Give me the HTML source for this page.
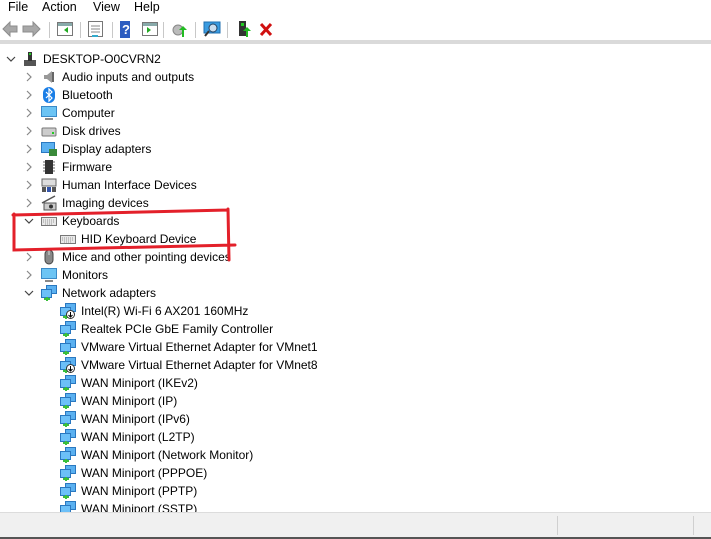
<!DOCTYPE html>
<html><head><meta charset="utf-8"><style>
*{margin:0;padding:0;box-sizing:border-box}
body{width:711px;height:539px;overflow:hidden;background:#fff;font-family:"Liberation Sans",sans-serif;font-size:12px;color:#000;position:relative}
.menu{position:absolute;top:0;left:0;width:711px;height:19px;background:#fff}
.menu span{position:absolute;top:0;font-size:12.5px}
.tb{position:absolute;top:19px;left:0;width:711px;height:21px;background:#fff}
.band{position:absolute;top:40px;left:0;width:711px;height:4px;background:#dadada}
.sep{position:absolute;top:22px;width:1px;height:16px;background:#c8c8c8}
.r{position:absolute;height:18px;line-height:18px;white-space:nowrap}
.ch{position:absolute;width:18px;height:18px}
.ic{position:absolute;width:16px;height:16px}
.status{position:absolute;left:0;top:512px;width:711px;height:25px;background:#f0f0f0;border-top:1px solid #dcdcdc}
.status i{position:absolute;top:3px;width:1px;height:19px;background:#d0d0d0}
</style></head><body>
<div class="menu"><span style="left:8px">File</span><span style="left:42px">Action</span><span style="left:93px">View</span><span style="left:134px">Help</span></div>
<div class="tb">
<svg width="290" height="21" style="position:absolute;left:0;top:0">
<path d="M3 10 L10 3 L10 7 L17 7 L17 13 L10 13 L10 17 Z" fill="#a8a8a8" stroke="#8c8c8c"/>
<path d="M40 10 L33 3 L33 7 L23 7 L23 13 L33 13 L33 17 Z" fill="#a8a8a8" stroke="#8c8c8c"/>
<rect x="57.5" y="3.5" width="15" height="13" fill="#fff" stroke="#777"/><rect x="58" y="4" width="14" height="3" fill="#8aa"/><path d="M68 8 L64 11 L68 14Z" fill="#2a2"/>
<rect x="88.5" y="2.5" width="14" height="15" fill="#fff" stroke="#777"/><path d="M91 7h9M91 10h9M91 13h9" stroke="#888"/><rect x="92" y="16" width="6" height="2" fill="#3ac"/>
<rect x="120" y="2" width="10" height="17" fill="#2c5cc0"/><text x="122" y="15" fill="#fff" font-size="13" font-weight="bold" font-family="Liberation Sans">?</text>
<rect x="142.5" y="3.5" width="15" height="13" fill="#fff" stroke="#777"/><rect x="143" y="4" width="14" height="3" fill="#8aa"/><path d="M147 8 L151 11 L147 14Z" fill="#2a2"/>
<circle cx="178" cy="11" r="5" fill="#bbb" stroke="#888"/><path d="M182 18v-7h-3l4-4 4 4h-3v7z" fill="#2b2"/>
<rect x="204" y="3" width="16" height="11" fill="#3a9be0" stroke="#1f6fb0"/><circle cx="213" cy="9" r="4" fill="#cde" stroke="#246"/><path d="M209 12 L205 17" stroke="#333" stroke-width="2"/>
<rect x="239" y="2" width="7" height="15" fill="#333"/><rect x="241" y="4" width="3" height="3" fill="#2c2"/><path d="M246 18v-6h-3l4-4 4 4h-3v6z" fill="#2b2"/>
<path d="M261 5 L271 16 M271 5 L261 16" stroke="#d01010" stroke-width="3"/>
</svg>
</div>
<div class="sep" style="left:49px"></div><div class="sep" style="left:80px"></div><div class="sep" style="left:112px"></div><div class="sep" style="left:163px"></div><div class="sep" style="left:195px"></div><div class="sep" style="left:227px"></div>
<div class="band"></div>

<svg width="0" height="0" style="position:absolute">
<defs>
<symbol id="cr" viewBox="0 0 18 18"><path d="M7 5 L11 9 L7 13" fill="none" stroke="#888" stroke-width="1.2"/></symbol>
<symbol id="cd" viewBox="0 0 18 18"><path d="M5 7 L9 11 L13 7" fill="none" stroke="#444" stroke-width="1.2"/></symbol>
<symbol id="net" viewBox="0 0 16 16"><rect x="5.5" y="0.5" width="10" height="8" fill="#5ab0f0" stroke="#2a78c0"/><rect x="0.5" y="4.5" width="10" height="8" fill="#6cc0f8" stroke="#2a78c0"/><rect x="3" y="13" width="6" height="2" fill="#3bbf3b"/><rect x="5" y="12" width="2" height="4" fill="#3bbf3b"/></symbol>
<symbol id="kb" viewBox="0 0 16 16"><rect x="0.5" y="4.5" width="15" height="8" fill="#e8e8e8" stroke="#777"/><path d="M2 7h12M2 9h12M4 11h8" stroke="#999" stroke-dasharray="1 1"/></symbol>
</defs></svg>

<div id="tree"></div>
<svg width="250" height="70" style="position:absolute;left:0;top:200px">
<path d="M13 15 L228 10 M14 14 L14 50 L235 45 M228 9 L229 60" fill="none" stroke="#e3202a" stroke-width="3" stroke-linecap="round"/>
</svg>
<div class="status"><i style="left:557px"></i><i style="left:693px"></i></div>
<div style="position:absolute;left:0;top:537px;width:711px;height:2px;background:#555"></div>
<script>
var rows=[
[0,'d','pc','DESKTOP-O0CVRN2'],
[1,'r','aud','Audio inputs and outputs'],[1,'r','bt','Bluetooth'],[1,'r','mon','Computer'],[1,'r','disk','Disk drives'],[1,'r','disp','Display adapters'],[1,'r','chip','Firmware'],[1,'r','hid','Human Interface Devices'],[1,'r','cam','Imaging devices'],
[1,'d','kb','Keyboards'],[2,'','kb','HID Keyboard Device'],
[1,'r','mouse','Mice and other pointing devices'],[1,'r','mon','Monitors'],[1,'d','net','Network adapters'],
[2,'','netw','Intel(R) Wi-Fi 6 AX201 160MHz'],[2,'','net','Realtek PCIe GbE Family Controller'],[2,'','net','VMware Virtual Ethernet Adapter for VMnet1'],[2,'','netw','VMware Virtual Ethernet Adapter for VMnet8'],
[2,'','net','WAN Miniport (IKEv2)'],[2,'','net','WAN Miniport (IP)'],[2,'','net','WAN Miniport (IPv6)'],[2,'','net','WAN Miniport (L2TP)'],[2,'','net','WAN Miniport (Network Monitor)'],[2,'','net','WAN Miniport (PPPOE)'],[2,'','net','WAN Miniport (PPTP)'],[2,'','net','WAN Miniport (SSTP)']];
var icons={
pc:'<rect x="2" y="9" width="12" height="6" fill="#555"/><rect x="6" y="1" width="4" height="9" fill="#333"/><rect x="7" y="2" width="2" height="2" fill="#2c2"/>',
aud:'<path d="M3 6h3l5-4v12l-5-4H3z" fill="#999"/><rect x="11" y="3" width="2" height="10" fill="#666"/>',
bt:'<rect x="2" y="0" width="12" height="16" rx="6" fill="#1a7ee6"/><path d="M5 5l6 6-3 3V2l3 3-6 6" fill="none" stroke="#fff" stroke-width="1.2"/>',
mon:'<rect x="0.5" y="1.5" width="15" height="10" fill="#6cc4f4" stroke="#3a8ac8"/><rect x="4" y="13" width="8" height="2" fill="#888"/>',
disk:'<rect x="1" y="5" width="14" height="8" rx="1" fill="#ccc" stroke="#777"/><rect x="11" y="9" width="2" height="2" fill="#2c2"/>',
disp:'<rect x="0.5" y="1.5" width="13" height="10" fill="#5ab0f0" stroke="#2a78c0"/><rect x="8" y="8" width="8" height="7" fill="#3a8a3a"/>',
chip:'<rect x="4" y="1" width="8" height="14" fill="#333"/><path d="M2 3h2M2 6h2M2 9h2M2 12h2M12 3h2M12 6h2M12 9h2M12 12h2" stroke="#666"/>',
hid:'<rect x="1" y="2" width="14" height="7" fill="#ddd" stroke="#666"/><rect x="1" y="10" width="4" height="5" fill="#555"/><rect x="6" y="10" width="4" height="5" fill="#35a"/><rect x="11" y="10" width="4" height="5" fill="#555"/>',
cam:'<path d="M1 8L14 1" stroke="#555" stroke-width="1.5"/><rect x="3" y="8" width="12" height="7" fill="#ccc" stroke="#555"/><circle cx="10" cy="11.5" r="2" fill="#333"/>',
kb:'<use href="#kb"/>',
mouse:'<rect x="4" y="1" width="8" height="14" rx="4" fill="#888" stroke="#444"/><path d="M8 1v5" stroke="#ddd"/>',
net:'<use href="#net"/>',
netw:'<use href="#net"/><circle cx="10.5" cy="11.5" r="4" fill="#fff" stroke="#333"/><path d="M10.5 9v5M8.5 12l2 2 2-2" stroke="#000" fill="none"/>'
};
var h='';
rows.forEach(function(r,i){
 var y=50+i*18,lv=r[0];
 var chx=[2,20,0][lv], icx=[22,41,60][lv], tx=[43,62,81][lv];
 if(r[1]) h+='<svg class="ch" style="left:'+chx+'px;top:'+y+'px" viewBox="0 0 18 18"><use href="#c'+r[1]+'"/></svg>';
 h+='<svg class="ic" style="left:'+icx+'px;top:'+(y+1)+'px" viewBox="0 0 16 16">'+icons[r[2]]+'</svg>';
 h+='<div class="r" style="left:'+tx+'px;top:'+y+'px">'+r[3]+'</div>';
});
document.getElementById('tree').innerHTML=h;
</script>
</body></html>
